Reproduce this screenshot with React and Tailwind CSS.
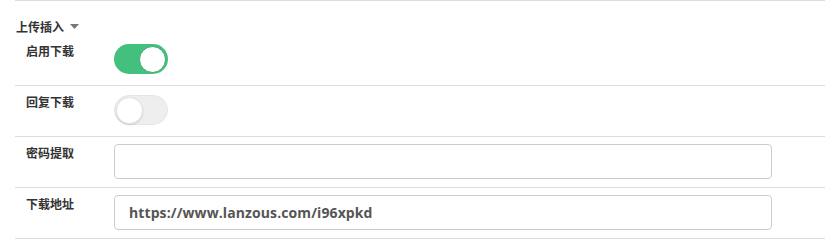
import React from "react";

const font = { fontFamily: '"Microsoft YaHei", "Noto Sans CJK SC", sans-serif' };

function Toggle({ on }) {
  return on ? (
    <div className="w-[54px] h-[30px] rounded-full bg-[#43c07d] flex items-center justify-end pr-[2px]">
      <div className="w-[27px] h-[27px] rounded-full bg-white border border-[#3aa86d]" />
    </div>
  ) : (
    <div className="w-[54px] h-[30px] rounded-full bg-[#eeeeee] border border-[#e6e6e6] flex items-center pl-[1px]">
      <div className="w-[27px] h-[27px] rounded-full bg-white border border-[#e3e3e3] shadow-[0_1px_2px_rgba(0,0,0,0.12)]" />
    </div>
  );
}

function Row({ label, children, pt }) {
  return (
    <div className="flex h-[51px] border-b border-[#dddddd]">
      <div className="w-[99px] pl-[11px] pt-[8px] text-[12px] leading-[16px] font-bold text-[#333]" style={font}>
        {label}
      </div>
      <div className={pt}>{children}</div>
    </div>
  );
}

function Input({ value }) {
  return (
    <div
      className="w-[658px] h-[35px] rounded-[4px] border border-[#cccccc] bg-white flex items-center pl-[14px] text-[14px] tracking-[0.1px] font-bold text-[#555]"
      style={{ fontFamily: '"Open Sans", "Segoe UI", sans-serif' }}
    >
      {value}
    </div>
  );
}

export default function App() {
  return (
    <div className="w-[825px] h-[242px] bg-white overflow-hidden">
      <div className="ml-[15px] border-t border-[#dddddd]">
        <div className="h-[34px] pt-[18px] flex items-start text-[12px] leading-[16px] font-bold text-[#333]" style={font}>
          <span className="pl-[1px]">上传插入</span>
          <svg width="9" height="6" viewBox="0 0 9 6" className="ml-[6px] mt-[5px]">
            <polygon points="0,0 9,0 4.5,5" fill="#777" />
          </svg>
        </div>
        <Row label="启用下载" pt="pt-[9px]">
          <Toggle on />
        </Row>
        <Row label="回复下载" pt="pt-[9px]">
          <Toggle on={false} />
        </Row>
        <Row label="密码提取" pt="pt-[7px]">
          <Input value="" />
        </Row>
        <Row label="下载地址" pt="pt-[7px]">
          <Input value="https://www.lanzous.com/i96xpkd" />
        </Row>
      </div>
    </div>
  );
}
